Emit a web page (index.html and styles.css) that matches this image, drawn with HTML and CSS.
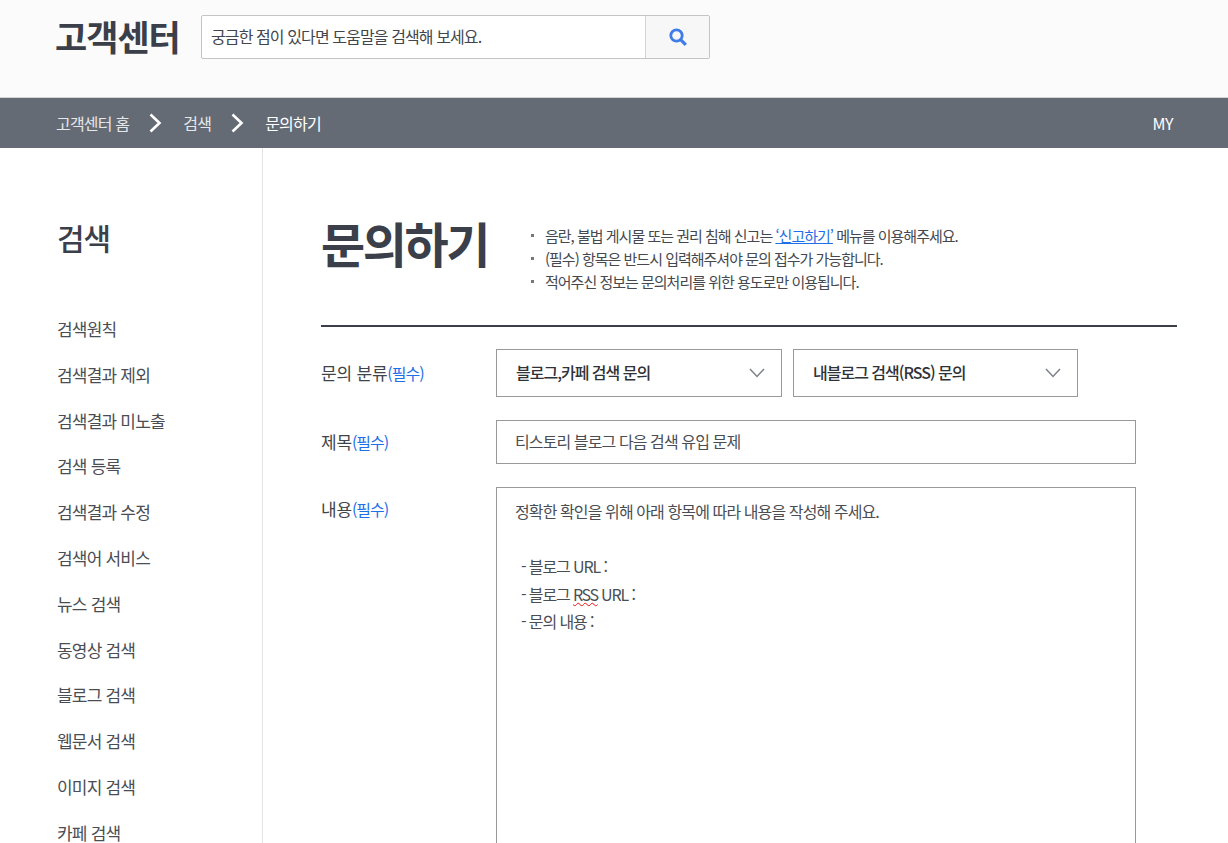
FILE: index.html
```html
<!DOCTYPE html>
<html lang="ko">
<head>
    <meta charset="UTF-8">
    <meta name="viewport" content="width=device-width, initial-scale=1.0">
    <title>고객센터 문의하기</title>
    <link rel="stylesheet" href="styles.css">
</head>
<body>
    <header class="top">
        <div class="logo">고객센터</div>
        <form class="search">
            <div class="search-input">궁금한 점이 있다면 도움말을 검색해 보세요.</div>
            <div class="search-btn">
                <svg width="20" height="20" viewBox="0 0 20 20" fill="none">
                    <circle cx="8.5" cy="8.5" r="5.7" stroke="#3f7ce8" stroke-width="2.8"/>
                    <path d="M12.8 12.8L17.8 17.8" stroke="#3f7ce8" stroke-width="3.2"/>
                </svg>
            </div>
        </form>
    </header>

    <nav class="crumbs">
        <a class="crumb">고객센터 홈</a>
        <svg class="crumb-arrow" width="14" height="20" viewBox="0 0 14 20" fill="none"><path d="M1.5 1.5L10.5 10L1.5 18.5" stroke="#fff" stroke-width="2.6"/></svg>
        <a class="crumb">검색</a>
        <svg class="crumb-arrow" width="14" height="20" viewBox="0 0 14 20" fill="none"><path d="M1.5 1.5L10.5 10L1.5 18.5" stroke="#fff" stroke-width="2.6"/></svg>
        <a class="crumb current">문의하기</a>
        <a class="crumb-my">MY</a>
    </nav>

    <div class="wrap">
        <aside class="side">
            <h2 class="side-title">검색</h2>
            <ul class="side-menu">
                <li>검색원칙</li>
                <li>검색결과 제외</li>
                <li>검색결과 미노출</li>
                <li>검색 등록</li>
                <li>검색결과 수정</li>
                <li>검색어 서비스</li>
                <li>뉴스 검색</li>
                <li>동영상 검색</li>
                <li>블로그 검색</li>
                <li>웹문서 검색</li>
                <li>이미지 검색</li>
                <li>카페 검색</li>
            </ul>
        </aside>

        <main class="content">
            <div class="head">
                <h1 class="title">문의하기</h1>
                <ul class="notice">
                    <li>음란, 불법 게시물 또는 권리 침해 신고는 <a class="notice-link">‘신고하기’</a> 메뉴를 이용해주세요.</li>
                    <li>(필수) 항목은 반드시 입력해주셔야 문의 접수가 가능합니다.</li>
                    <li>적어주신 정보는 문의처리를 위한 용도로만 이용됩니다.</li>
                </ul>
            </div>

            <div class="row row-select">
                <div class="label">문의 분류<em>(필수)</em></div>
                <div class="select">
                    <span>블로그,카페 검색 문의</span>
                    <svg width="16" height="10" viewBox="0 0 16 10" fill="none"><path d="M1 1L8 8.5L15 1" stroke="#7d8288" stroke-width="1.5"/></svg>
                </div>
                <div class="select">
                    <span>내블로그 검색(RSS) 문의</span>
                    <svg width="16" height="10" viewBox="0 0 16 10" fill="none"><path d="M1 1L8 8.5L15 1" stroke="#7d8288" stroke-width="1.5"/></svg>
                </div>
            </div>

            <div class="row row-title">
                <div class="label">제목<em>(필수)</em></div>
                <div class="field">티스토리 블로그 다음 검색 유입 문제</div>
            </div>

            <div class="row row-body">
                <div class="label">내용<em>(필수)</em></div>
                <div class="field area">
                    <p>정확한 확인을 위해 아래 항목에 따라 내용을 작성해 주세요.</p>
                    <p class="blank">&nbsp;</p>
                    <p class="sub">- 블로그 URL :</p>
                    <p class="sub">- 블로그 <span class="typo">RSS</span> URL :</p>
                    <p class="sub">- 문의 내용 :</p>
                </div>
            </div>
        </main>
    </div>
</body>
</html>
```

FILE: styles.css
```css
* {
    box-sizing: border-box;
}

html, body {
    height: 843px;
    overflow: hidden;
}

body {
    margin: 0;
    font-family: "Noto Sans CJK KR", "Noto Sans", sans-serif;
    font-size: 16px;
    color: #3c4047;
    background: #fff;
    letter-spacing: -1px;
}

ul {
    margin: 0;
    padding: 0;
    list-style: none;
}

/* Header */
.top {
    height: 98px;
    display: flex;
    align-items: flex-start;
    padding: 15px 0 0 55px;
    background: #fbfbfb;
    border-bottom: 1px solid #d4d4d4;
}

.logo {
    width: 146px;
    font-size: 35px;
    line-height: 41px;
    font-weight: 700;
    letter-spacing: -1px;
    color: #3b3f49;
}

.search {
    display: flex;
    width: 509px;
    height: 44px;
    background: #fff;
    border: 1px solid #c4c4c4;
    border-radius: 2px;
}

.search-input {
    flex: 1;
    padding-left: 9px;
    line-height: 40px;
    letter-spacing: -0.9px;
    color: #42464c;
}

.search-btn {
    width: 64px;
    display: flex;
    align-items: center;
    justify-content: center;
    background: #f7f7f7;
    border-left: 1px solid #d4d4d4;
}

/* Breadcrumb */
.crumbs {
    height: 50px;
    display: flex;
    align-items: center;
    padding: 0 55px 0 56px;
    background: #646b75;
    color: #e6e7e9;
    letter-spacing: -0.8px;
}

.crumb-arrow {
    margin: 0 20px 0 20px;
}

.current {
    color: #fff;
}

.crumb-my {
    margin-left: auto;
    letter-spacing: -0.5px;
    color: #fff;
}

/* Layout */
.wrap {
    display: flex;
    align-items: stretch;
    height: 695px;
}

.side {
    width: 263px;
    padding: 67px 0 0 57px;
    border-right: 1px solid #e4e4e4;
}

.side-title {
    margin: 0 0 47px;
    font-size: 30px;
    line-height: 44px;
    font-weight: 500;
    letter-spacing: -1px;
    color: #3b3f49;
}

.side-menu li {
    height: 45.8px;
    font-size: 17px;
    line-height: 45.8px;
    letter-spacing: -0.8px;
    color: #4a4e54;
}

.content {
    width: 856px;
    margin-left: 58px;
}

.head {
    display: flex;
    height: 179px;
    padding-top: 56px;
    border-bottom: 2px solid #3b3e48;
}

.title {
    width: 208px;
    margin: 0;
    font-size: 48px;
    line-height: 76px;
    font-weight: 700;
    letter-spacing: -2.4px;
    color: #3b3f49;
}

.notice {
    padding-top: 20px;
    font-size: 15px;
    line-height: 23px;
    color: #45494f;
}

.notice li {
    position: relative;
    padding-left: 16px;
}

.notice li::before {
    content: "";
    position: absolute;
    left: 2px;
    top: 10px;
    width: 3px;
    height: 3px;
    background: #777;
}

.notice-link {
    color: #1f6fe8;
    text-decoration: underline;
}

/* Form rows */
.row {
    display: flex;
    align-items: flex-start;
}

.row-select {
    margin-top: 22px;
    gap: 11px;
}

.row-title {
    margin-top: 23px;
}

.row-body {
    margin-top: 23px;
}

.label {
    width: 175px;
    font-size: 17px;
    letter-spacing: -0.2px;
    color: #3f444a;
}

.label em {
    font-style: normal;
    font-size: 16px;
    letter-spacing: -1px;
    color: #1f6fe8;
}

.row-select .label {
    width: 164px;
    line-height: 48px;
}

.row-title .label {
    line-height: 44px;
}

.row-body .label {
    line-height: 44px;
}

.select {
    width: 286px;
    height: 48px;
    display: flex;
    align-items: center;
    justify-content: space-between;
    padding: 0 16px 0 19px;
    border: 1px solid #999;
    font-weight: 500;
    color: #2f3237;
}

.select span {
    padding-bottom: 2px;
}

.select + .select {
    width: 285px;
}

.field {
    width: 640px;
    height: 44px;
    padding-left: 18px;
    line-height: 40px;
    letter-spacing: -0.9px;
    border: 1px solid #999;
    color: #4a4e54;
}

.area {
    height: 500px;
    padding: 10px 18px 0;
    line-height: 27.5px;
}

.area p {
    margin: 0;
}

.area .sub {
    padding-left: 6px;
    letter-spacing: -1.1px;
}

.typo {
    letter-spacing: -1.4px;
    text-decoration: underline wavy #f01010;
    text-decoration-thickness: 1.2px;
}
```
